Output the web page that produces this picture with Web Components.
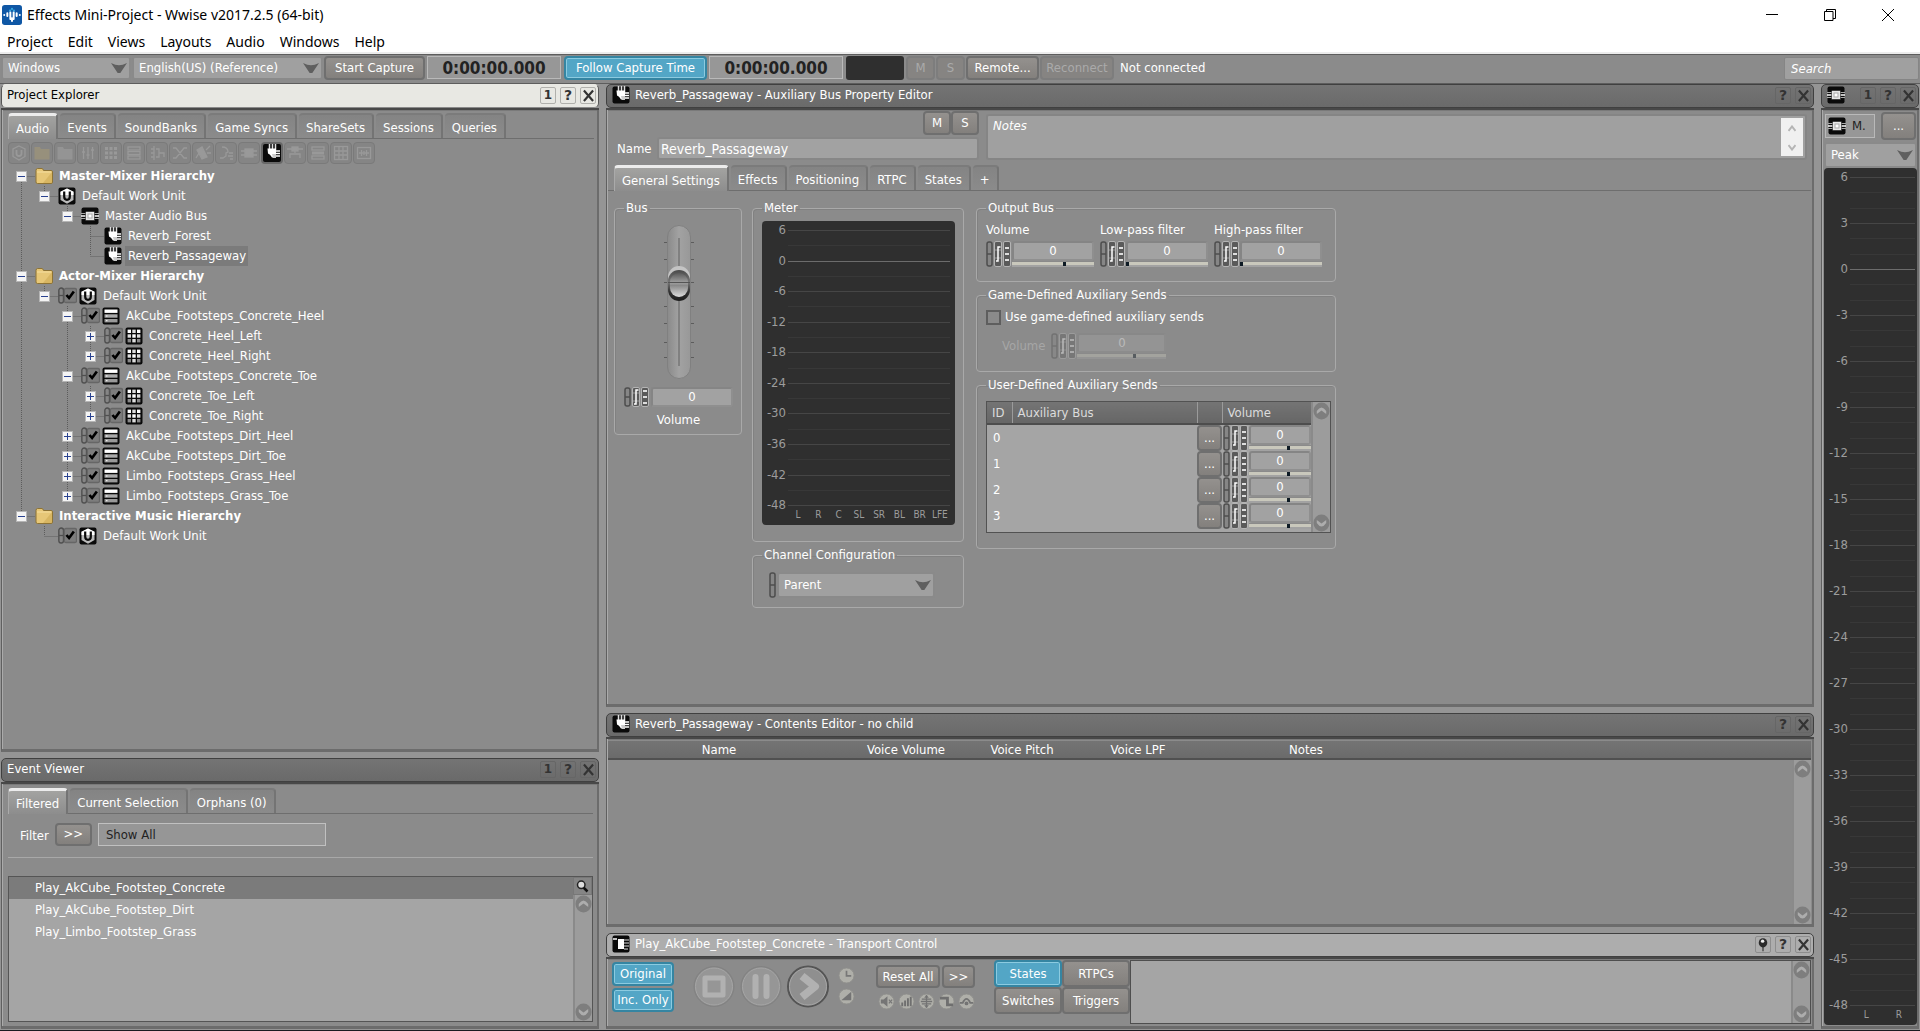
<!DOCTYPE html>
<html lang="en">
<head>
<meta charset="utf-8">
<title>Effects Mini-Project - Wwise v2017.2.5 (64-bit)</title>
<style>
html,body{margin:0;height:100%;overflow:hidden;background:#959595}
body{font:13px/16px "DejaVu Sans Condensed","DejaVu Sans",sans-serif;color:#fff}
</style>
</head>
<body>
<ww-app></ww-app>
<script>
const BASE = `*{box-sizing:border-box}
button,input,select,textarea{font:inherit;color:inherit;margin:0;padding:0;outline:0}
svg{display:block;flex:none}
:host{display:block}`;
class WwElement extends HTMLElement {
  connectedCallback() {
    if (this.shadowRoot) return;
    const root = this.attachShadow({mode: 'open'});
    root.innerHTML = `<style>${BASE}${this.css()}</style>${this.html()}`;
  }
  a(name, fallback = '') { return this.hasAttribute(name) ? this.getAttribute(name) : fallback; }
  css() { return ''; }
  html() { return ''; }
}

/* ---------- icons ---------- */
const K = '<rect x=".5" y=".5" width="17" height="17" rx="2" fill="#0a0a0a"/>';
const cell = (x, y, f) => `<rect x="${x}" y="${y}" width="3.4" height="3.4" fill="${f}"/>`;
const grid = () => {
  const f = ['#fff','#ddd','#fff','#ddd','#fff','#ddd','#888','#ddd','#888'];
  return f.map((c, i) => cell(2.6 + (i % 3) * 4.7, 2.6 + Math.floor(i / 3) * 4.7, c)).join('');
};
const ring = c => `<circle cx="9" cy="9" r="8" fill="#afafa9" stroke="#8f8f8c"/>${c}`;
const ICONS = {
  folder: '<path d="M1 3.500Q1 1.500 2.500 1.500H7Q8 1.500 8.500 3.500H16Q17.500 3.500 17.500 5V15Q17.500 16.500 16 16.500H2.500Q1 16.500 1 15Z" fill="#e7c777" stroke="#8d7335"/><path d="M2 5H16.500" stroke="#f6dfa2"/><path d="M17 5V16H8Z" fill="#cfaa55" opacity=".6"/>',
  work: K + '<path d="M9 1.500 15.500 4.800V13L9 16.700 2.500 13V4.800Z" fill="#bbb"/><path d="M9 1.500 15.500 4.800V8H2.500V4.800Z" fill="#fff"/><path d="M6.200 4.500V9.500Q6.200 12.800 9 12.800T11.800 9.500V4.500" fill="none" stroke="#0a0a0a" stroke-width="2.200"/>',
  bus: K + '<path d="M0 6.500H18M0 11.500H18" stroke="#aaa"/><path d="M0 9H18" stroke="#fff" stroke-width="1.500"/><rect x="4.500" y="4.500" width="9" height="9" fill="#e8e8e8" stroke="#0a0a0a" stroke-width=".5"/><rect x="7" y="7" width="4" height="4" fill="#fff" stroke="#aaa"/>',
  aux: K + '<path d="M6.500 0V6M9.500 0V6M12.500 0V6" stroke="#ddd" stroke-width="1.500"/><path d="M4.500 4.500H13V13.500H9Q7 10 5 9.500Z" fill="#fff"/><path d="M13 7H17M13 9.500H17M13 12H17" stroke="#fff" stroke-width="1.400"/><path d="M9 10H13V14H10Z" fill="#ccc"/>',
  actor: K + '<rect x="2.500" y="2.500" width="13" height="3.400" fill="#fff"/><rect x="2.500" y="7.300" width="13" height="3.400" fill="#aaa"/><rect x="2.500" y="12" width="13" height="3.400" fill="#999"/><path d="M4 13.700H5.500M4 9H5.500" stroke="#fff"/>',
  random: K + grid(),
  event: K + '<path d="M1 4H5" stroke="#fff" stroke-width="1.500"/><rect x="6" y="4" width="6" height="10" fill="#fff"/><path d="M12 5H17M12 8H17M12 11H17M12 14H16" stroke="#ddd"/>',
  check: '<rect x=".800" y="1" width="4.400" height="15" rx="2.200" fill="#858585" stroke="#4f4f4f" stroke-width="1.300"/><path d="M1 8.500H5" stroke="#4f4f4f" stroke-width="1.300"/><rect x="6" y="1.500" width="11.500" height="14" rx="1.500" fill="#7d7d7d" stroke="#666" stroke-width="1.300"/><path d="M8 8 10.500 11 15 4.500" fill="none" stroke="#000" stroke-width="2.500"/>',
  logo: '<rect width="18" height="18" rx="2.500" fill="#0f57a5"/><g stroke="#fff" stroke-width="1.800" stroke-linecap="round"><path d="M2 9V9.100M4.800 7.500V10M7.500 6.500V12.500M10.500 6.500V12.500M13.200 7.500V10M16 9V9.100M9 12V14.500"/></g><circle cx="7.300" cy="5" r="1" fill="#35a8e0"/><circle cx="10.700" cy="5" r="1" fill="#35a8e0"/><circle cx="9" cy="3.500" r="1" fill="#35a8e0"/>',
  arrow: '<path d="M0 2.500Q5 5.500 9 5.500T18 2.500L10.500 15.500H7.500Z" fill="#5f5f5f"/>',
  magnify: '<circle cx="7.500" cy="7" r="4.500" fill="#ddd" stroke="#222" stroke-width="1.800"/><path d="M10.500 10.500 15 15" stroke="#111" stroke-width="3"/>',
  pin: '<path d="M9 11V17" stroke="#333" stroke-width="1.500"/><circle cx="9" cy="7" r="5.500" fill="#2b2b2b"/><ellipse cx="8.500" cy="5" rx="2.200" ry="2" fill="#eee"/>',
  close: '<path d="M3.500 3 14.500 15.500M14.500 3 3.500 15.500" stroke="currentColor" stroke-width="2.600"/>',
  up: '<circle cx="9" cy="9" r="8.500" fill="#7e7e7e"/><path d="M4 12V9Q9 2 14 9V12L9 8.500Z" fill="#adadad"/>',
  down: '<circle cx="9" cy="9" r="8.500" fill="#7e7e7e"/><path d="M4 6V9Q9 16 14 9V6L9 9.500Z" fill="#adadad"/>',
  clock: ring('<path d="M9 4V9.500H14" fill="none" stroke="#777" stroke-width="1.800"/>'),
  fade: ring('<path d="M3.500 13 14 4V13Z" fill="#747474"/>'),
  t1: ring('<path d="M3 7H6L10 3.500V14.500L6 11H3Z" fill="#757575"/><path d="M11.500 7 15 11M15 7 11.500 11" stroke="#777" stroke-width="1.300"/>'),
  t2: ring('<path d="M4.500 14V10M7.500 14V8M10.500 14V5.500M13.500 14V4" stroke="#6f6f6f" stroke-width="2"/>'),
  t3: ring('<path d="M3 9H15M9 2.500V15.500M4 6.500H14M4 11.500H14" stroke="#737373" stroke-width="1.400"/><path d="M9 2 6.500 5H11.500ZM9 16 6.500 13H11.500Z" fill="#737373"/>'),
  t4: ring('<path d="M2 5.500H10V12.500H16" fill="none" stroke="#6f6f6f" stroke-width="3"/>'),
  t5: ring('<path d="M2 10.500H5Q9 2 13 10.500H16" fill="none" stroke="#737373" stroke-width="2"/><circle cx="9" cy="11" r="2" fill="#737373"/>')
};
/* outline glyphs of the object-type toolbar */
const DIM = [
  '<path d="M9 2 15 5V12.500L9 16 3 12.500V5Z"/><path d="M6.500 6V9.500Q6.500 12 9 12T11.500 9.500V6" stroke-width="1.800"/>',
  '<path d="M1.500 3H7L8 5H16.500V15.500H1.500Z" fill="#97907c" stroke="none"/>',
  '<path d="M1.500 3H7L8 5H16.500V15.500H1.500Z" fill="#949494" stroke="none"/>',
  '<path d="M4.500 3V15M9 3V15M13.500 3V15M3 8H6M7.500 11H10.500M12 6H15"/>',
  '<path d="M3 3H6V6H3ZM7.500 3H10.500V6H7.500ZM12 3H15V6H12ZM3 7.500H6V10.500H3ZM7.500 7.500H10.500V10.500H7.500ZM12 7.500H15V10.500H12ZM3 12H6V15H3ZM7.500 12H10.500V15H7.500ZM12 12H15V15H12Z" fill="#999" stroke="none"/>',
  '<rect x="3" y="3" width="12" height="3"/><rect x="3" y="7.500" width="12" height="3"/><rect x="3" y="12" width="12" height="3"/>',
  '<path d="M6 2V16M3 5H6M3 9H6M3 13H6M8 5H11V13H8M11 9H16V13"/>',
  '<path d="M2 4H5L13 14H16M2 14H5L13 4H16"/>',
  '<path d="M3 6 8 3 13 13 8 15Z" fill="#999"/><path d="M12 6 16 2M13 9H17M5 9 2 14"/>',
  '<path d="M5 3Q11 3 11 8L9 9V12L6 14H3M12 9H16M11 12H16M13 15H16"/>',
  '<path d="M1 7H17M1 11H17"/><rect x="5" y="5" width="8" height="8" fill="#999"/>', null,
  '<path d="M1 5H17M9 5V9"/><rect x="6" y="3" width="6" height="4" fill="#999"/><path d="M4 14V10H14V14"/>',
  '<rect x="3" y="3" width="12" height="3"/><path d="M3 9H15" stroke-width="3"/><rect x="3" y="12" width="12" height="3"/>',
  '<rect x="2.500" y="2.500" width="13" height="13"/><path d="M2.500 7H15.500M2.500 11H15.500M7 2.500V15.500M11 2.500V15.500"/>',
  '<rect x="2.500" y="3.500" width="13" height="11"/><path d="M4 9H14M6.500 6V12M9 7V11M11.500 6V12"/>'
];
const icon = (name, w = 18, h = w) => `<svg width="${w}" height="${h}" viewBox="0 0 18 18" preserveAspectRatio="none" aria-hidden="true">${ICONS[name]}</svg>`;

/* ---------- title bar and menu ---------- */
customElements.define('ww-titlebar', class extends WwElement {
  css() { return `:host{background:#fff;color:#000;border-bottom:2px solid #ececec;font:14px/20px "Noto Sans","Open Sans",sans-serif}
.t{display:flex;align-items:center;height:29px;padding:0 3px 0 2px}
.t span{margin-left:5px;flex:1}
.t button{border:0;background:none;width:58px;height:29px;display:grid;place-items:center;color:#000}
nav{display:flex;gap:15px;height:23px;padding:3px 7px 0}
nav a{color:#000;text-decoration:none}`; }
  html() { return `<div class="t">${icon('logo', 20)}<span>Effects Mini-Project - Wwise v2017.2.5 (64-bit)</span>
<button aria-label="Minimize"><svg width="12" height="12" stroke="#000" fill="none"><path d="M0 5.500H12"/></svg></button>
<button aria-label="Restore"><svg width="12" height="12" stroke="#000" fill="none"><path d="M.5 2.500H9V11.500H.5ZM2.500 2.500V.5H11.500V9.500H9"/></svg></button>
<button aria-label="Close"><svg width="12" height="12" stroke="#000" fill="none"><path d="M0 0 12 12M12 0 0 12"/></svg></button></div>
<nav>${['Project','Edit','Views','Layouts','Audio','Windows','Help'].map(m => `<a href="#">${m}</a>`).join('')}</nav>`; }
});

/* ---------- controls ---------- */
customElements.define('ww-button', class extends WwElement {
  css() { return `:host{display:block;flex:none}
button{display:block;width:100%;height:100%;white-space:nowrap;border:2px solid #6f6f6f;border-radius:4px;background:linear-gradient(#94918e,#83807d);color:#fff;overflow:hidden}
:host([on]) button{background:#53a6c6;border-color:#3585a2;box-shadow:inset 0 0 0 1px #8ccbe0}
:host([off]) button{border-color:#7d7d7d;background:#868482;color:#aaa}`; }
  html() { return `<button${this.hasAttribute('off') ? ' disabled' : ''}><slot></slot></button>`; }
});
customElements.define('ww-select', class extends WwElement {
  css() { return `:host{flex:none}
div{display:grid;height:100%}
select,svg{grid-area:1/1}
select{appearance:none;width:100%;height:100%;border:2px solid #8a8a8a;border-radius:3px;background:#a0a0a0;padding:0 5px;color:#fff}
svg{justify-self:end;align-self:center;margin-right:4px;pointer-events:none}`; }
  html() { return `<div><select aria-label="${this.a('label')}"><option>${this.a('value')}</option></select>${icon('arrow', 16, 14)}</div>`; }
});
customElements.define('ww-scroll', class extends WwElement {
  css() { return `:host{display:flex;flex:none;flex-direction:column;justify-content:space-between;align-items:center;width:19px;background:#9c9c9c;border-left:2px solid #8a8a8a}`; }
  html() { return icon('up', 17, 18) + icon('down', 17, 18); }
});
const linkset = (h, only) => {
  const m = h / 2;
  return `<svg width="${only ? 8 : 26}" height="${h}" aria-hidden="true"><rect x="1" y="1" width="5" height="${h - 2}" rx="2" fill="#868686" stroke="#4e4e4e" stroke-width="1.500"/><path d="M1 ${m}H6" stroke="#4e4e4e" stroke-width="1.500"/>${only ? '' :
  `<rect x="8.500" y=".5" width="7" height="${h - 1}" rx="1.500" fill="#5a5a5a" stroke="#b4b4b4"/><path d="M9 ${m - 4}H15M9 ${m + 4}H15" stroke="#999"/><path d="M10 ${m + 7}H12V${m - 7}H14.500" fill="none" stroke="#fff" stroke-width="1.500"/>
<rect x="17.500" y=".5" width="7" height="${h - 1}" rx="1.500" fill="#5a5a5a" stroke="#b4b4b4"/><path d="M19 ${m - 6}H23M19 ${m}H23M19 ${m + 6}H23" stroke="#ddd" stroke-width="2"/>`}</svg>`;
};
customElements.define('ww-spin', class extends WwElement {
  css() { return `:host{flex:none}
.w{display:flex;flex-direction:column;gap:3px}
label{white-space:nowrap}
:host([side]) .w{flex-direction:row;align-items:center;gap:6px}
:host([below]) .w{flex-direction:column-reverse;gap:5px}
:host([below]) label{text-align:center}
.c{display:flex;height:26px;flex:1 0 auto}
:host([below]) .c{height:20px;gap:1px}
.f{display:flex;flex-direction:column;flex:1;min-width:0}
.n{width:100%;flex:1;min-height:0;border:2px solid #8a8a8a;border-color:#858585 #8f8f8f #8f8f8f #858585;border-radius:3px;background:#a2a2a2;text-align:center}
.r{appearance:none;display:block;width:100%;height:6px;background:linear-gradient(#8a8a8a 1px,#c9c8bc 1px,#c9c8bc 4px,#a2a2a2 4px);border:0}
.r::-webkit-slider-thumb{appearance:none;width:3px;height:4px;background:#0d1a24}
:host([side]) .f{flex:none;width:89px}
:host([off]) .c{opacity:.4}
:host([off]) label{color:#a6a6a6}`; }
  html() {
    const below = this.hasAttribute('below'), l = this.a('label'), off = this.hasAttribute('off') ? ' disabled' : '';
    return `<div class="w">${this.hasAttribute('bare') ? '' : `<label for="n">${l}</label>`}<div class="c">${linkset(below ? 20 : 26)}<div class="f"><input id="n" class="n" value="0" aria-label="${l}"${off}>${below ? '' : `<input type="range" class="r" min="0" max="100" value="${this.a('pos', 0)}" aria-label="${l} slider"${off}>`}</div></div></div>`;
  }
});
customElements.define('ww-tabs', class extends WwElement {
  css() { return `:host{display:flex;gap:2px;height:26px;flex:none;border-bottom:1px solid #6e6e6e;padding-left:var(--inset,0)}
button{border:0;border-right:2px solid #747474;border-top:2px solid #7b7b7b;border-radius:4px 4px 0 0;background:linear-gradient(#848484,#8b8b8b);padding:3px 7px 0;height:25px;white-space:nowrap}
button:first-of-type{height:26px;margin-bottom:-1px;background:linear-gradient(#a3a3a1,#8d8d8d);border-top:3px solid #ececec;border-left:1px solid #aaa;padding-top:2px}`; }
  html() { return this.a('items').split('|').map((t, i) => `<button role="tab" aria-selected="${i === 0}">${t}</button>`).join(''); }
});
customElements.define('ww-group', class extends WwElement {
  css() { return `fieldset{margin:0;padding:0 8px 0 9px;min-width:0;border:1px solid #a9a9a9;border-radius:4px;box-shadow:inset 1px 1px 0 #818181}
legend{padding:0 2px;margin:0;line-height:14px}`; }
  html() { return `<fieldset><legend>${this.a('label')}</legend><slot></slot></fieldset>`; }
});

/* ---------- panel frame ---------- */
customElements.define('ww-panel', class extends WwElement {
  css() { return `:host{display:flex;flex-direction:column;min-width:0;min-height:0}
header{display:flex;align-items:center;gap:5px;flex:none;height:24px;padding:0 2px 2px 5px;border:1px solid #404040;border-radius:5px;background:linear-gradient(#747474,#6a6a6a);color:#fff}
header span{flex:1;white-space:nowrap;overflow:hidden}
header button{width:16px;height:17px;border:1px solid #666;border-radius:2px;background:none;color:#333;display:grid;place-items:center;font:bold 14px/14px "DejaVu Sans",sans-serif}
.b{display:flex;gap:4px}
header .d{font-size:12px}
:host([active]) header{background:#e8e8e3;color:#000;border-color:#e8e8e3 #555 #8a8a8a}
:host([active]) button{border-color:#b0b0ac}
:host([pinned]) header{background:#adadad}
:host([pinned]) button{border-color:#8d8d8d}
section{flex:1;min-height:0;display:flex;flex-direction:column;border:1px solid;border-color:#a5a5a5 #6c6c6c #6c6c6c #606060;border-top:0;border-right-width:2px;border-bottom-width:3px;background:#8b8b8b;box-shadow:inset 1px 0 0 #ababab,inset 0 1px 0 #7a7a7a}
.s{height:2px;background:#484848;flex:none}`; }
  html() {
    const map = {'1': '<button class="d" aria-label="Link 1">1</button>', '?': '<button aria-label="Help">?</button>', 'x': `<button aria-label="Close">${icon('close', 15, 15)}</button>`, 'p': `<button aria-label="Pin">${icon('pin', 14, 15)}</button>`};
    return `<header>${this.a('icon') ? icon(this.a('icon')) : ''}<span>${this.a('label')}</span><div class="b">${[...this.a('tools')].map(c => map[c]).join('')}</div></header><div class="s"></div><section><slot></slot></section>`;
  }
});

/* ---------- meter ---------- */
customElements.define('ww-meter', class extends WwElement {
  css() { return `:host{display:flex;flex-direction:column;background:#2f2f2f;border-radius:4px;color:#9c9c9c;padding:9px var(--pr,5px) 0 0}
.k{flex:1;display:flex;flex-direction:column;min-height:0}
.s{flex:1;display:grid;grid-template-columns:24px 1fr;column-gap:2px;min-height:0}
.s b,.z b{font-weight:400;height:0;line-height:0;text-align:right}
.l{display:flex;flex-direction:column}
.l i{flex:1;border-top:1px solid #383838}
.l i:first-child,.z i{border-top:1px solid #464646}
.zero .l i:first-child{border-color:#6c6c6c}
.z{display:grid;grid-template-columns:24px 1fr;column-gap:2px;height:1px}
.c{display:flex;padding-left:26px;height:19px;font-size:10px;line-height:18px;text-align:center}
.c span{flex:1 0 0;width:0;display:flex;justify-content:center}`; }
  html() {
    const step = +this.a('step'), minor = +this.a('minor'), rows = [];
    for (let v = 6; v > -48; v -= step) rows.push(`<div class="s${v === 0 ? ' zero' : ''}"><b>${v}</b><div class="l">${'<i></i>'.repeat(minor)}</div></div>`);
    return `<div class="k">${rows.join('')}<div class="z"><b>-48</b><i></i></div></div><div class="c">${this.a('channels').split(' ').map(c => `<span>${c}</span>`).join('')}</div>`;
  }
});

/* ---------- tool bar ---------- */
customElements.define('ww-toolbar', class extends WwElement {
  css() { return `:host{display:flex;align-items:stretch;gap:1px;height:30px;padding:1px 1px 3px;background:#8b8b8b;border-top:1px solid #5d5d5d;border-bottom:1px solid #5d5d5d}
output{display:grid;place-items:center;border:1px solid #b9b9b9;background:#979797;color:#222;font:bold 17px/20px "DejaVu Sans Condensed",sans-serif;width:134px;margin:0 2px 1px 1px}
.led{width:58px;background:#2f2f2f;border-radius:3px;margin:0 1px 0 0}
p{margin:0 auto 0 5px;line-height:24px}
input{width:135px;border:1px solid #858585;border-radius:2px;background:#a0a0a0;padding:0 6px;margin-top:1px;font-style:italic}
input::placeholder{color:#fff;opacity:1}`; }
  html() { return `<ww-select style="width:130px" label="Platform" value="Windows"></ww-select><ww-select style="width:191px" label="Language" value="English(US) (Reference)"></ww-select>
<ww-button style="width:101px">Start Capture</ww-button><output>0:00:00.000</output>
<ww-button style="width:143px" on>Follow Capture Time</ww-button><output>0:00:00.000</output><div class="led"></div>
<ww-button style="width:29px" off>M</ww-button><ww-button style="width:29px" off>S</ww-button><ww-button style="width:73px">Remote...</ww-button><ww-button style="width:74px" off>Reconnect</ww-button><p>Not connected</p><input type="search" placeholder="Search" aria-label="Search">`; }
});
customElements.define('ww-typebar', class extends WwElement {
  css() { return `:host{display:flex;gap:1px;padding:3px 0 0 6px;height:26px}
button{width:22px;height:22px;border:1px solid #7a7a7a;border-radius:4px;background:#858585;display:grid;place-items:center}
.on{border:2px solid #686868;background:#0a0a0a}`; }
  html() { return DIM.map((d, i) => d ? `<button aria-label="New object ${i + 1}" disabled><svg width="18" height="18" fill="none" stroke="#999" stroke-width="1.300">${d}</svg></button>` : `<button class="on" aria-label="New auxiliary bus">${icon('aux')}</button>`).join(''); }
});

/* ---------- project tree ---------- */
const TREE = [
  [0,'-','folder','Master-Mixer Hierarchy'], [1,'-','work','Default Work Unit'], [2,'-','bus','Master Audio Bus'],
  [3,'','aux','Reverb_Forest'], [3,'','aux','Reverb_Passageway',0,1],
  [0,'-','folder','Actor-Mixer Hierarchy'], [1,'-','work','Default Work Unit',1],
  [2,'-','actor','AkCube_Footsteps_Concrete_Heel',1], [3,'+','random','Concrete_Heel_Left',1], [3,'+','random','Concrete_Heel_Right',1],
  [2,'-','actor','AkCube_Footsteps_Concrete_Toe',1], [3,'+','random','Concrete_Toe_Left',1], [3,'+','random','Concrete_Toe_Right',1],
  [2,'+','actor','AkCube_Footsteps_Dirt_Heel',1], [2,'+','actor','AkCube_Footsteps_Dirt_Toe',1],
  [2,'+','actor','Limbo_Footsteps_Grass_Heel',1], [2,'+','actor','Limbo_Footsteps_Grass_Toe',1],
  [0,'-','folder','Interactive Music Hierarchy'], [1,'','work','Default Work Unit',1]
];
customElements.define('ww-tree', class extends WwElement {
  css() { return `:host{flex:1;min-height:0;overflow:hidden;padding:1px 0 0 9px}
ul{list-style:none;margin:0;padding:0}
li{display:flex;align-items:center;height:20px}
.root{font-weight:700}
em{font-style:normal;margin-left:3px;padding:0 2px 0 3px;line-height:20px;white-space:nowrap}
.sel{background:#7b7b7b}
.chk{margin-right:2px}`; }
  html() {
    const follows = (i, d) => { for (let j = i + 1; j < TREE.length; j++) { if (TREE[j][0] < d) return false; if (TREE[j][0] === d) return true; } return false; };
    return `<ul>${TREE.map(([d, e, ic, t, chk, sel], i) => {
      let g = '';
      for (let k = 0; k <= d; k++) {
        const x = k * 23 + 10.5, below = follows(i, k);
        if (k < d) { if (below) g += `M${x} 0V20`; }
        else g += `M${x} ${d || i ? 0 : 10}V${below ? 20 : 10}M${x} 10.500H${x + 13}`;
      }
      const w = d * 23 + 24, bx = d * 23 + 5;
      const box = e ? `<rect x="${bx + .5}" y="5.500" width="10" height="10" fill="#f4f4f4" stroke="#b5b5b5"/><path d="M${bx + 2} 10.500H${bx + 9}${e === '+' ? `M${bx + 5.5} 7V14` : ''}" stroke="#28418f"/>` : '';
      return `<li class="${d ? '' : 'root'}"><svg width="${w}" height="20"><path d="${g}" stroke="#5c5c5c" stroke-dasharray="1 1" fill="none"/>${box}</svg>${chk ? `<span class="chk">${icon('check', 19, 18)}</span>` : ''}${icon(ic)}<em class="${sel ? 'sel' : ''}">${t}</em></li>`;
    }).join('')}</ul>`;
  }
});

/* ---------- event viewer ---------- */
customElements.define('ww-events', class extends WwElement {
  css() { return `:host{flex:1;min-height:0;display:flex;flex-direction:column;padding:4px 4px 4px 6px}
.f{display:flex;align-items:center;margin:1px 0 0 12px;height:38px;gap:6px}
.f label{padding-top:4px}
.f ww-button{width:37px;height:23px}
.f input{width:228px;height:23px;border:1px solid #c0c0c0;background:#969696;color:#222;padding:0 7px}
hr{width:100%;border:0;border-top:1px solid #a8a8a8;margin:4px 0 18px;flex:none}
.l{flex:1;min-height:0;display:flex;border:1px solid #555;background:#a5a5a5}
ul{list-style:none;margin:0;padding:0;flex:1}
li{height:22px;line-height:22px;padding-left:26px}
.sel{background:#7b7b7b}
.s{display:flex;flex-direction:column}
.s button{width:19px;height:18px;border:1px solid #777;background:#858585;display:grid;place-items:center}
.s ww-scroll{flex:1}`; }
  html() { return `<ww-tabs items="Filtered|Current Selection|Orphans (0)"></ww-tabs>
<div class="f"><label for="q">Filter</label><ww-button>&gt;&gt;</ww-button><input id="q" value="Show All"></div><hr>
<div class="l"><ul><li class="sel">Play_AkCube_Footstep_Concrete</li><li>Play_AkCube_Footstep_Dirt</li><li>Play_Limbo_Footstep_Grass</li></ul><div class="s"><button aria-label="Find">${icon('magnify', 15)}</button><ww-scroll></ww-scroll></div></div>`; }
});

/* ---------- property editor ---------- */
customElements.define('ww-fader', class extends WwElement {
  css() { return `:host{display:grid;justify-content:center}
svg,input{grid-area:1/1}
input{appearance:none;writing-mode:vertical-lr;width:30px;height:154px;opacity:0}`; }
  html() {
    const ticks = [17,34,57,81,98,117,132].map(y => `M0 ${y}.500H5M25 ${y}.500H30`).join('');
    return `<svg width="30" height="154"><defs><linearGradient id="t"><stop offset="0" stop-color="#8a8a8a"/><stop offset=".5" stop-color="#a2a2a2"/><stop offset="1" stop-color="#989898"/></linearGradient><linearGradient id="r" x2="0" y2="1"><stop offset="0" stop-color="#4a4a4a"/><stop offset=".4" stop-color="#777"/><stop offset=".7" stop-color="#333"/><stop offset="1" stop-color="#1c1c1c"/></linearGradient><linearGradient id="k" x2="0" y2="1"><stop offset="0" stop-color="#5a5a5a"/><stop offset=".4" stop-color="#a0a0a0"/><stop offset=".52" stop-color="#8a8a8a"/><stop offset="1" stop-color="#ddd"/></linearGradient></defs>
<path d="${ticks}" stroke="#5c5c5c"/><rect x="3.500" y=".5" width="23" height="153" rx="11.500" fill="url(#t)" stroke="#808080"/><path d="M15 13V141" stroke="#808080" stroke-width="2"/>
<rect x="4" y="41" width="22" height="35" rx="11" fill="#c4c4c4"/><rect x="4" y="45" width="22" height="31" rx="11" fill="url(#r)"/><rect x="6" y="48" width="18" height="24" rx="9" fill="url(#k)"/><path d="M4 57.500H26" stroke="#555"/></svg><input type="range" aria-label="Bus volume fader">`;
  }
});
customElements.define('ww-property', class extends WwElement {
  css() { return `:host{flex:1;min-height:0;display:flex;flex-direction:column;padding:1px 1px 0 1px}
.top{display:flex;gap:7px;padding:0 4px 0 9px;height:49px}
.left{width:362px;flex:none;display:flex;flex-direction:column}
.ms{display:flex;justify-content:flex-end;height:24px;margin-bottom:2px}
.ms ww-button{width:28px}
.nm{display:flex;align-items:center;justify-content:space-between}
.nm input{width:322px;height:23px;border:2px solid #878787;border-radius:3px;background:#a2a2a2;padding-left:2px;font-size:14px}
.notes{flex:1;display:flex;margin-top:3px;border:2px solid #858585;border-radius:3px;background:#a0a0a0;padding:2px 2px 2px 5px}
textarea{flex:1;resize:none;border:0;background:none;font-style:italic}
textarea::placeholder{color:#fff;opacity:1}
.sb{width:22px;background:#f0f0f0;display:flex;flex-direction:column;justify-content:space-between;align-items:center;padding:7px 0 5px}
.tabs{margin-top:5px;--inset:6px}
.g{display:flex;align-items:flex-start;gap:10px;padding:10px 6px}
.c{display:flex;flex-direction:column;gap:6px}
.bus{width:128px}.m{width:212px}.o{width:360px;margin-left:2px}
.busb{padding:10px 0 6px;height:219px;display:flex;flex-direction:column;gap:8px}
ww-meter{width:193px;height:304px;margin:6px 0 16px}
.cc{display:flex;padding:10px 0 9px 7px}
.cc ww-select{width:158px;height:26px}
.ob{display:flex;gap:6px;padding:7px 0 14px}
.ob ww-spin{width:108px}
.gd{padding:7px 0 12px}
.gd label{display:flex;align-items:center;gap:4px}
.gd input{appearance:none;width:15px;height:15px;border:2px solid #5e5e5e;background:#8a8a8a}
.gd ww-spin{margin:8px 0 0 16px;width:166px}
.ud{display:flex;border:1px solid #525252;margin:9px 0 15px;height:132px;background:#a5a5a5;width:345px}
table{border-collapse:collapse;table-layout:fixed;width:325px;height:0}
th{background:linear-gradient(#747474,#666);height:22px;font-weight:400;text-align:left;padding:0 0 0 5px;border-right:1px solid #9b9b9b;border-bottom:2px solid #4d4d4d;color:#dcdcdc}
th:last-child{border-right:0}
td{padding:0;height:26px}
td:first-child{padding-left:6px}
td ww-button{height:26px;width:25px}
td ww-spin{width:88px;margin-left:1px}
.ud ww-scroll{margin-left:auto}`; }
  html() { return `<div class="top"><div class="left"><div class="ms"><ww-button>M</ww-button><ww-button>S</ww-button></div><div class="nm"><label for="name">Name</label><input id="name" value="Reverb_Passageway"></div></div>
<div class="notes"><textarea placeholder="Notes" aria-label="Notes"></textarea><div class="sb"><svg width="8" height="7" fill="none" stroke="#b5b5b5" stroke-width="2"><path d="M.5 6 4 1.500 7.500 6"/></svg><svg width="8" height="7" fill="none" stroke="#b5b5b5" stroke-width="2"><path d="M.5 1 4 5.500 7.500 1"/></svg></div></div></div>
<ww-tabs class="tabs" items="General Settings|Effects|Positioning|RTPC|States|+"></ww-tabs>
<div class="g"><ww-group class="bus" label="Bus"><div class="busb"><ww-fader></ww-fader><ww-spin label="Volume" below></ww-spin></div></ww-group>
<div class="c m"><ww-group label="Meter"><ww-meter step="6" minor="2" channels="L R C SL SR BL BR LFE"></ww-meter></ww-group>
<ww-group label="Channel Configuration"><div class="cc">${linkset(26, true)}<ww-select label="Channel configuration" value="Parent"></ww-select></div></ww-group></div>
<div class="c o"><ww-group label="Output Bus"><div class="ob"><ww-spin label="Volume" pos="65"></ww-spin><ww-spin label="Low-pass filter" pos="0"></ww-spin><ww-spin label="High-pass filter" pos="0"></ww-spin></div></ww-group>
<ww-group label="Game-Defined Auxiliary Sends"><div class="gd"><label><input type="checkbox">Use game-defined auxiliary sends</label><ww-spin label="Volume" side off pos="65"></ww-spin></div></ww-group>
<ww-group label="User-Defined Auxiliary Sends"><div class="ud"><table><colgroup><col style="width:25px"><col style="width:185px"><col style="width:25px"><col></colgroup><thead><tr><th>ID</th><th>Auxiliary Bus</th><th></th><th>Volume</th></tr></thead><tbody>${[0,1,2,3].map(i => `<tr><td>${i}</td><td></td><td><ww-button>...</ww-button></td><td><ww-spin bare label="Volume ${i}" pos="65"></ww-spin></td></tr>`).join('')}</tbody></table><ww-scroll></ww-scroll></div></ww-group></div></div>`; }
});

/* ---------- contents editor ---------- */
customElements.define('ww-contents', class extends WwElement {
  css() { return `:host{flex:1;min-height:0;display:flex;flex-direction:column;padding:2px 1px 0 1px}
table{border-collapse:collapse;table-layout:fixed;width:100%;background:linear-gradient(#747474,#6a6a6a)}
th{height:18px;padding:0;font-weight:400;line-height:16px;border-bottom:2px solid #505050}
.n{padding-right:18px}
ww-scroll{flex:1;align-self:flex-end}`; }
  html() { return `<table><colgroup><col style="width:240px"><col style="width:116px"><col style="width:116px"><col style="width:116px"><col style="width:220px"><col></colgroup><thead><tr><th class="n">Name</th><th>Voice Volume</th><th>Voice Pitch</th><th>Voice LPF</th><th>Notes</th><th></th></tr></thead></table><ww-scroll></ww-scroll>`; }
});

/* ---------- transport ---------- */
customElements.define('ww-transport', class extends WwElement {
  css() { return `:host{flex:1;min-height:0;display:flex;align-items:flex-start;padding:1px 1px 2px 5px}
.a{display:flex;flex-direction:column;gap:2px;width:62px;margin-top:2px}
.a ww-button{height:24px}
.p{display:flex;gap:5px;margin:4px 0 0 19px}
.p button{border:0;background:none;display:block}
.v{display:flex;flex-direction:column;gap:4px;margin:7px 0 0 9px}
.k{margin:5px 0 0 21px}
.r{display:flex;gap:2px;height:23px}
.r ww-button:first-child{width:64px}
.r ww-button{width:33px}
.i{display:flex;gap:3px;margin:5px 0 0 2px}
.q{display:grid;grid-template-columns:68px 68px;grid-auto-rows:27px;margin:0 0 0 19px}
.q ww-button{height:27px}
.log{flex:1;align-self:stretch;display:flex;justify-content:flex-end;border:1px solid #4e4e4e;background:#a5a5a5}`; }
  html() {
    const disc = (g, on) => `<svg width="42" height="44" viewBox="0 0 42 44"><circle cx="21" cy="22.500" r="20" fill="#888" stroke="${on ? '#555' : '#828282'}" stroke-width="${on ? 2 : 1}"/><circle cx="21" cy="22.500" r="18.500" fill="${on ? '#8f8f8f' : '#969696'}" stroke="#a6a6a6"/><g fill="none" stroke="#b1b1b1" stroke-width="6" stroke-linejoin="round">${g}</g></svg>`;
    return `<div class="a"><ww-button on>Original</ww-button><ww-button on>Inc. Only</ww-button></div>
<div class="p"><button aria-label="Stop">${disc('<path d="M12 14H30V31H12Z" stroke-width="5"/>')}</button><button aria-label="Pause">${disc('<path d="M15.500 13V32M26.500 13V32" stroke-linecap="round"/>')}</button><button aria-label="Play">${disc('<path d="M15 12 28 22.500 15 33" stroke-width="8"/>', 1)}</button></div>
<div class="v">${icon('clock', 17)}${icon('fade', 17)}</div>
<div class="k"><div class="r"><ww-button>Reset All</ww-button><ww-button>&gt;&gt;</ww-button></div><div class="i">${['t1','t2','t3','t4','t5'].map(n => icon(n, 17)).join('')}</div></div>
<div class="q"><ww-button on>States</ww-button><ww-button>RTPCs</ww-button><ww-button>Switches</ww-button><ww-button>Triggers</ww-button></div>
<div class="log"><ww-scroll></ww-scroll></div>`;
  }
});
customElements.define('ww-masterbar', class extends WwElement {
  css() { return `:host{flex:1;min-height:0;display:flex;flex-direction:column;padding:1px 0 1px 2px;--pr:2px}
.t{display:flex;justify-content:space-between;align-items:center;height:29px;padding:0 1px;flex:none}
.m{display:flex;align-items:center;gap:6px;width:50px;height:24px;border:1px solid #b9b9b9;background:#979797;color:#222;padding-left:2px}
ww-button{width:35px;height:28px}
ww-select{height:26px;margin:2px 0 0;width:100%}
ww-meter{flex:1;min-height:0}`; }
  html() { return `<div class="t"><div class="m">${icon('bus')}M.</div><ww-button>...</ww-button></div><ww-select label="Meter mode" value="Peak"></ww-select><ww-meter step="3" minor="3" channels="L R"></ww-meter>`; }
});

customElements.define('ww-app', class extends WwElement {
  css() { return `:host{display:flex;flex-direction:column;box-sizing:border-box;height:100vh;background:#959595;border-bottom:1px solid #1c1c20}
main{flex:1;min-height:0;display:grid;grid-template-columns:minmax(0,598fr) minmax(0,1208fr) 98px;gap:7px;padding:0 1px 1px}
.l,.c{display:grid;gap:6px;min-height:0}
.l{grid-template-rows:minmax(0,668fr) minmax(0,271fr)}
.c{grid-template-rows:minmax(0,623fr) minmax(0,214fr) minmax(0,96fr)}
.ex{margin:3px 3px 0 6px}`; }
  html() { return `<ww-titlebar></ww-titlebar><ww-toolbar></ww-toolbar><main>
<div class="l"><ww-panel active label="Project Explorer" tools="1?x"><ww-tabs class="ex" items="Audio|Events|SoundBanks|Game Syncs|ShareSets|Sessions|Queries"></ww-tabs><ww-typebar></ww-typebar><ww-tree></ww-tree></ww-panel>
<ww-panel label="Event Viewer" tools="1?x"><ww-events></ww-events></ww-panel></div>
<div class="c"><ww-panel icon="aux" label="Reverb_Passageway - Auxiliary Bus Property Editor" tools="?x"><ww-property></ww-property></ww-panel>
<ww-panel icon="aux" label="Reverb_Passageway - Contents Editor - no child" tools="?x"><ww-contents></ww-contents></ww-panel>
<ww-panel pinned icon="event" label="Play_AkCube_Footstep_Concrete - Transport Control" tools="p?x"><ww-transport></ww-transport></ww-panel></div>
<ww-panel icon="bus" tools="1?x"><ww-masterbar></ww-masterbar></ww-panel></main>`; }
});
</script>
</body>
</html>
